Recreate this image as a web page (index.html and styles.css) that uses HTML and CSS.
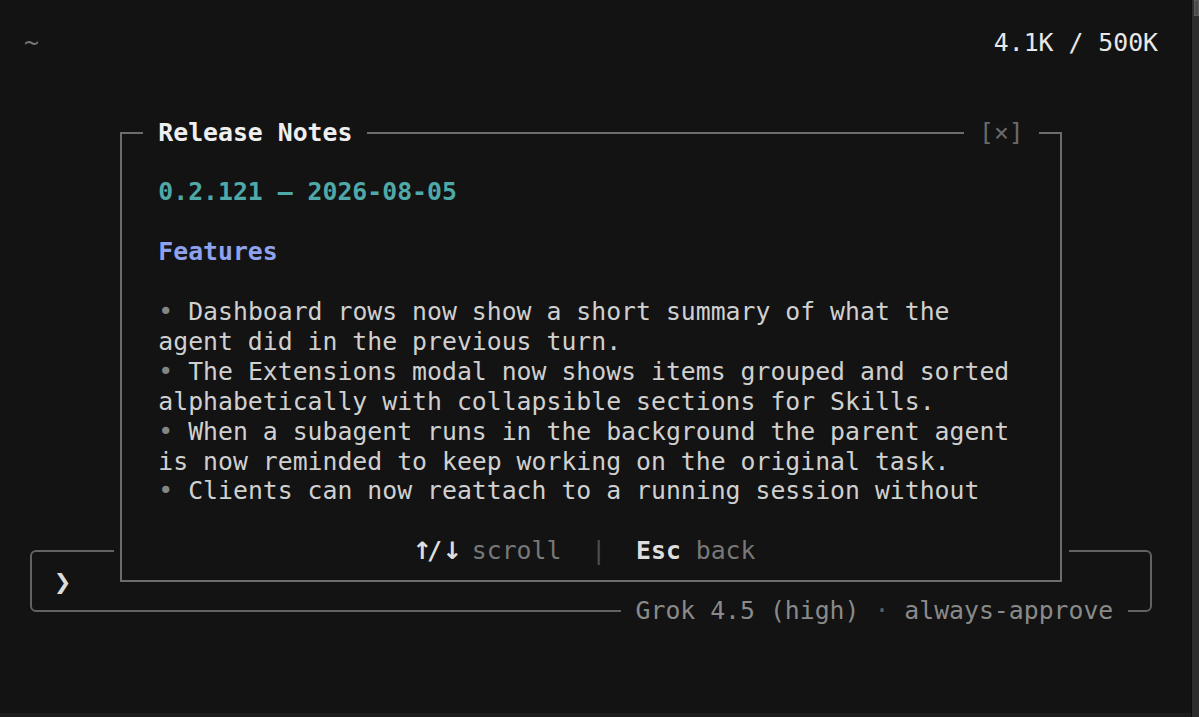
FILE: index.html
```html
<!DOCTYPE html>
<html lang="en">
<head>
<meta charset="utf-8">
<title>Release Notes</title>
<link rel="stylesheet" href="styles.css">
</head>
<body>
<div class="window">
  <main class="screen">
    <div class="cwd">~</div>
    <div class="tokens">4.1K / 500K</div>

    <section class="prompt">
      <div class="prompt-frame">
        <div class="prompt-line"><span class="caret">❯</span></div>
        <div class="prompt-status"><span class="status">Grok 4.5 (high) <span class="dot">·</span> always-approve</span></div>
      </div>
    </section>

    <section class="modal">
      <div class="modal-frame">
        <header class="modal-head">
          <span class="modal-title">Release Notes</span>
          <span class="modal-close">[×]</span>
        </header>
        <div class="modal-body">
          <div class="row"></div>
          <div class="row version">0.2.121 — 2026-08-05</div>
          <div class="row"></div>
          <div class="row heading">Features</div>
          <div class="row"></div>
          <div class="notes">
            <p><span class="bullet">•</span> Dashboard rows now show a short summary of what the agent did in the previous turn.</p>
            <p><span class="bullet">•</span> The Extensions modal now shows items grouped and sorted alphabetically with collapsible sections for Skills.</p>
            <p><span class="bullet">•</span> When a subagent runs in the background the parent agent is now reminded to keep working on the original task.</p>
            <p><span class="bullet">•</span> Clients can now reattach to a running session without</p>
          </div>
          <div class="row"></div>
          <div class="row keys"><b class="key"><span class="arrow">↑</span>/<span class="arrow">↓</span></b> <span class="hint">scroll</span>  <span class="sep">|</span>  <b class="key">Esc</b> <span class="hint">back</span></div>
        </div>
      </div>
    </section>
  </main>
  <div class="scrollbar"><div class="thumb"></div></div>
  <div class="bottom-edge"></div>
</div>
</body>
</html>
```
FILE: styles.css
```css
:root {
  --rh: 29.9px;
  --cw: 14.93px;
  --bg: #131313;
}

html, body {
  margin: 0;
  padding: 0;
}

body {
  background: var(--bg);
  overflow: hidden;
}

.window {
  display: grid;
  grid-template-columns: 1fr 8px;
  grid-template-rows: 1fr 4px;
  width: 1199px;
  height: 717px;
}

.screen {
  grid-column: 1;
  grid-row: 1;
  overflow: hidden;
  font-family: "DejaVu Sans Mono", "Liberation Mono", monospace;
  font-size: 24.8px;
  line-height: var(--rh);
  color: #d0d0d0;
  display: grid;
  grid-template-columns: repeat(76, 1ch);
  grid-template-rows: repeat(20, var(--rh));
  align-content: start;
  padding: 28px 0 0 24px;
}

.cwd {
  grid-column: 1 / 2;
  grid-row: 1;
  color: #767676;
}

.tokens {
  grid-column: 60 / 77;
  grid-row: 1;
  text-align: right;
  color: #e8e8e8;
  white-space: pre;
}

/* prompt input box */
.prompt {
  grid-column: 1 / 77;
  grid-row: 18 / 21;
  display: flex;
}

.prompt-frame {
  flex: 1;
  margin: calc(var(--rh) / 2 - 1px) calc(0.5ch - 1px);
  border: 2px solid #626262;
  border-radius: 6px;
  display: flex;
  flex-direction: column;
  padding-top: calc(var(--rh) / 2 - 1px);
}

.prompt-line {
  height: var(--rh);
  padding-left: calc(1.5ch - 1px);
}

.caret {
  color: #dcdcdc;
  font-weight: bold;
  font-family: "DejaVu Sans", sans-serif;
  font-size: 21px;
}

.prompt-status {
  height: var(--rh);
  margin-bottom: calc(-1 * var(--rh) / 2 - 1px);
  display: flex;
  justify-content: flex-end;
  padding-right: calc(1.5ch - 1px);
}

.status {
  background: var(--bg);
  padding: 0 1ch;
  color: #8a8a8a;
  white-space: pre;
}

.status .dot {
  color: #616161;
}

/* modal */
.modal {
  grid-column: 7 / 71;
  grid-row: 4 / 20;
  background: var(--bg);
  z-index: 1;
  display: flex;
}

.modal-frame {
  flex: 1;
  margin: calc(var(--rh) / 2 - 1px) calc(0.5ch - 1px);
  border: 2px solid #6c6c6c;
  display: flex;
  flex-direction: column;
  padding-bottom: calc(var(--rh) / 2 - 1px);
}

.modal-head {
  height: var(--rh);
  margin-top: calc(-1 * var(--rh) / 2 - 1px);
  display: flex;
  justify-content: space-between;
  padding: 0 calc(1.5ch - 1px);
}

.modal-title {
  background: var(--bg);
  padding: 0 1ch;
  color: #efefef;
  font-weight: bold;
}

.modal-close {
  background: var(--bg);
  padding: 0 1ch;
  color: #6a6a6a;
}

.modal-body {
  padding-left: calc(2.5ch - 1px);
}

.row {
  height: var(--rh);
  white-space: pre;
}

.version {
  color: #4fa9a8;
  font-weight: bold;
}

.heading {
  color: #8ea2ee;
  font-weight: bold;
}

.notes {
  width: 58ch;
  height: calc(7 * var(--rh));
  overflow: hidden;
}

.notes p {
  margin: 0;
}

.bullet {
  color: #858585;
}

.keys {
  padding-left: 17ch;
}

.key {
  color: #dedede;
  font-weight: bold;
}

.arrow {
  display: inline-block;
  width: var(--cw);
  text-align: center;
  font-family: "DejaVu Sans", sans-serif;
  font-size: 24px;
  line-height: 1;
}

.hint {
  color: #787878;
}

.sep {
  color: #4e4e4e;
}

/* window chrome */
.scrollbar {
  grid-column: 2;
  grid-row: 1 / 3;
  background: #2c2c2c;
  border-left: 1px solid #0c0c0c;
}

.thumb {
  height: 14px;
  margin-left: 2px;
  background: #4a4a4a;
  border: 1px solid #5c5c5c;
}

.bottom-edge {
  grid-column: 1;
  grid-row: 2;
  background: #1c1c1c;
}
```
